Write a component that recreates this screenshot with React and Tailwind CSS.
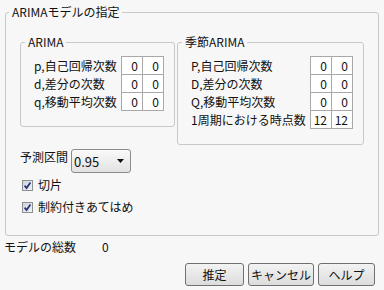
const font = { fontFamily: '"Noto Sans CJK JP", "Noto Sans", sans-serif' };

function Cell({ value, first }) {
  return (
    <div
      className={
        "flex h-[19px] w-[22px] items-center justify-end border border-[#a8a8a8] bg-white pr-[4px] leading-none " +
        (first ? "" : "-ml-px")
      }
    >
      {value}
    </div>
  );
}

function Grid({ rows, labelWidth }) {
  return (
    <div className="flex flex-col">
      {rows.map((r, i) => (
        <div key={r.label} className={"flex items-center " + (i === 0 ? "" : "-mt-px")}>
          <div className="h-[19px] leading-[19px] whitespace-nowrap" style={{ width: labelWidth }}>
            {r.label}
          </div>
          <Cell value={r.a} first />
          <Cell value={r.b} />
        </div>
      ))}
    </div>
  );
}

function Group({ title, className, children }) {
  return (
    <fieldset className={"rounded-[3px] border border-[#c9c9c9] " + className}>
      <legend className="ml-[4px] px-[3px] leading-[18px]">{title}</legend>
      {children}
    </fieldset>
  );
}

function Check({ label }) {
  return (
    <div className="flex h-[22px] items-center gap-[5px] pl-[2px]">
      <svg width="11" height="11" viewBox="0 0 11 11">
        <defs>
          <linearGradient id="cb" x1="0" y1="0" x2="1" y2="1">
            <stop offset="0" stopColor="#cfd3dc" />
            <stop offset="1" stopColor="#f2f3f6" />
          </linearGradient>
        </defs>
        <rect x="0.5" y="0.5" width="10" height="10" fill="url(#cb)" stroke="#8e8f8f" />
        <path d="M2.6 5.6 L4.6 8 L8.4 2.6" fill="none" stroke="#23327a" strokeWidth="1.7" />
      </svg>
      <span className="leading-[18px]">{label}</span>
    </div>
  );
}

function Button({ label, w }) {
  return (
    <button
      className="flex h-[23px] items-center justify-center rounded-[3px] border border-[#707070] bg-gradient-to-b from-[#f3f3f3] to-[#dcdcdc] leading-none text-[#111]"
      style={{ width: w }}
    >
      {label}
    </button>
  );
}

export default function App() {
  return (
    <div className="h-[290px] w-[384px] bg-[#f7f7f7] pt-[3px] text-[12px] text-[#111]" style={font}>
      <fieldset className="ml-[5px] h-[233px] w-[374px] rounded-[3px] border border-[#c9c9c9]">
        <legend className="ml-[3px] px-[3px] leading-[18px]">ARIMAモデルの指定</legend>
        <div className="flex items-start gap-[2px] pl-[14px] pt-[12px]">
          <Group title="ARIMA" className="h-[94px] w-[155px]">
            <div className="pl-[13px] pt-[5px]">
              <Grid
                labelWidth={87}
                rows={[
                  { label: "p,自己回帰次数", a: 0, b: 0 },
                  { label: "d,差分の次数", a: 0, b: 0 },
                  { label: "q,移動平均次数", a: 0, b: 0 },
                ]}
              />
            </div>
          </Group>
          <Group title="季節ARIMA" className="h-[112px] w-[187px]">
            <div className="pl-[13px] pt-[5px]">
              <Grid
                labelWidth={119}
                rows={[
                  { label: "P,自己回帰次数", a: 0, b: 0 },
                  { label: "D,差分の次数", a: 0, b: 0 },
                  { label: "Q,移動平均次数", a: 0, b: 0 },
                  { label: "1周期における時点数", a: 12, b: 12 },
                ]}
              />
            </div>
          </Group>
        </div>
        <div className="mt-[4px] flex items-start gap-[3px] pl-[14px]">
          <span className="leading-[16px]">予測区間</span>
          <div className="flex h-[24px] w-[60px] items-center justify-between rounded-[3px] border border-[#8c8c8c] bg-gradient-to-b from-[#fafafa] to-[#e2e2e2] pl-[2px] pr-[6px] text-[13px]">
            <span className="leading-none">0.95</span>
            <svg width="7" height="4" viewBox="0 0 7 4">
              <path d="M0 0 H7 L3.5 4 Z" fill="#111" />
            </svg>
          </div>
        </div>
        <div className="mt-[1px] pl-[14px]">
          <Check label="切片" />
          <Check label="制約付きあてはめ" />
        </div>
      </fieldset>
      <div className="mt-[2px] flex pl-[4px] leading-[18px]">
        <span className="w-[98px]">モデルの総数</span>
        <span>0</span>
      </div>
      <div className="mt-[7px] flex justify-end gap-[4px] pr-[9px]">
        <Button label="推定" w={59} />
        <Button label="キャンセル" w={66} />
        <Button label="ヘルプ" w={57} />
      </div>
    </div>
  );
}
